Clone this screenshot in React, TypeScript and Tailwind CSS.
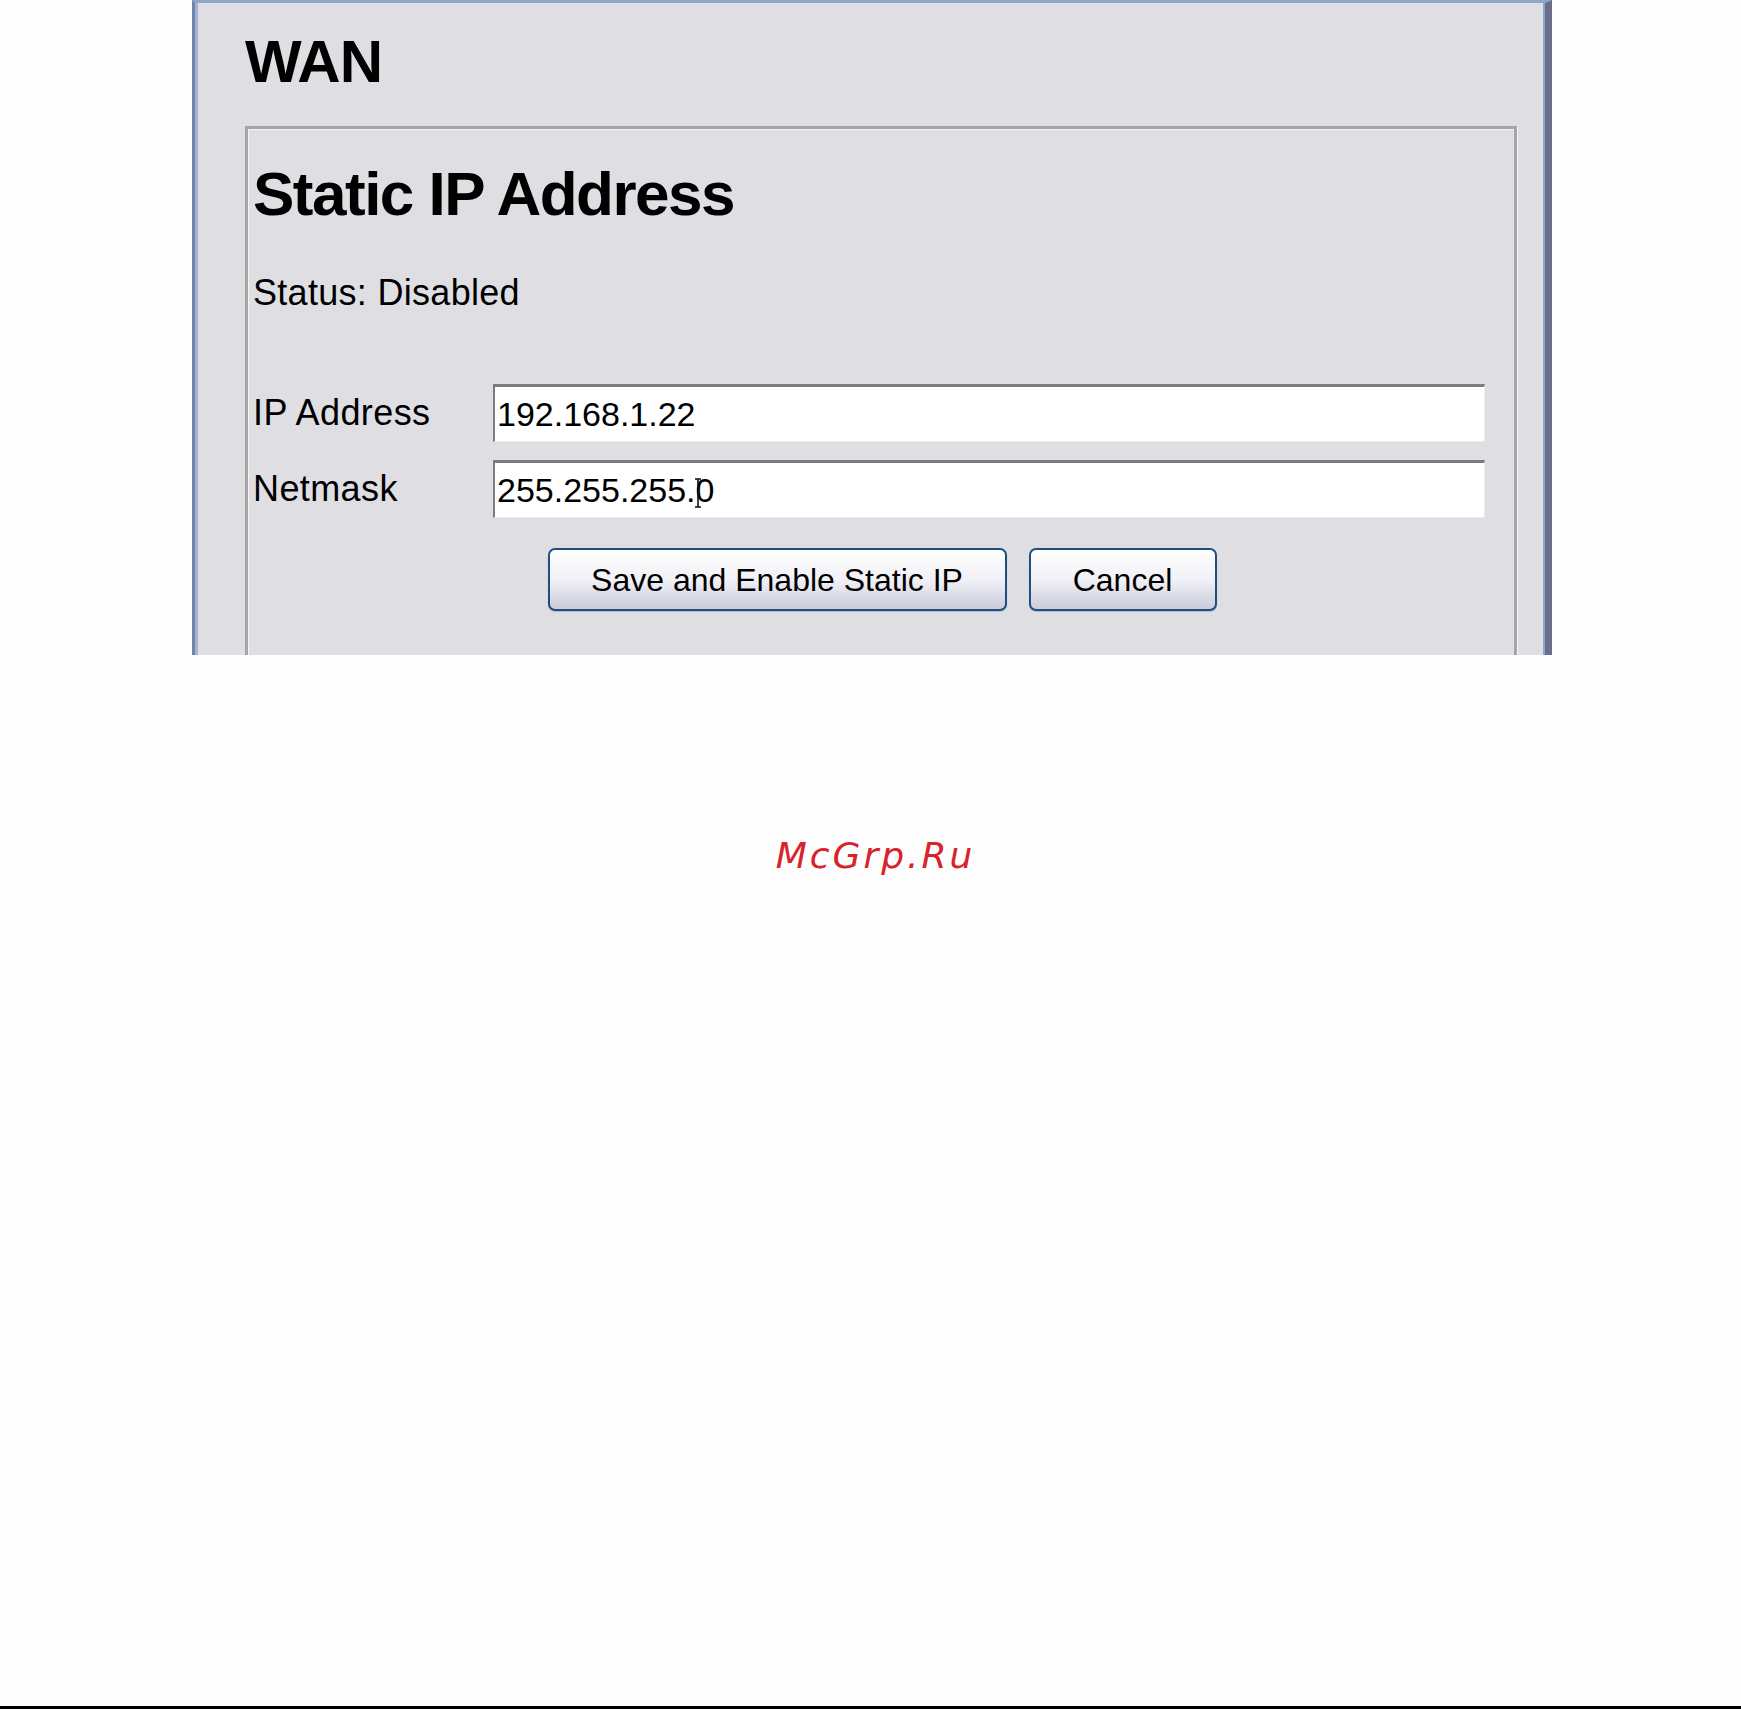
import React from 'react';

const sans = "font-['Liberation_Sans',Arial,sans-serif]";

const Field: React.FC<{ label: string; value: string; caret?: boolean }> = ({ label, value, caret }) => (
  <div className="flex items-center">
    <label className={`w-[240px] shrink-0 text-[36px] leading-none tracking-[0.4px] text-black ${sans}`}>{label}</label>
    <div className="relative w-[992px]">
      <input
        readOnly
        value={value}
        className={`block w-full h-[58px] bg-white border-t-[3px] border-l-[2px] border-r border-b border-t-[#7c7c7c] border-l-[#7c7c7c] border-r-[#ececec] border-b-[#ececec] px-[2px] text-[34px] text-black outline-none ${sans}`}
      />
      {caret && (
        <svg className="absolute left-[200px] top-[18px]" width="10" height="30" viewBox="0 0 10 30">
          <path d="M2 1h3M5 1h3M5 1v28M2 29h3M5 29h3" fill="none" stroke="#111" strokeWidth="1.6" />
        </svg>
      )}
    </div>
  </div>
);

const XpButton: React.FC<{ children: React.ReactNode; width: string }> = ({ children, width }) => (
  <button
    className={`${width} h-[63px] rounded-[7px] border-2 border-[#1e4f82] bg-gradient-to-b from-[#ffffff] via-[#f1f1f6] to-[#cbcbdc] shadow-[0_1px_1px_#b9b9c2] text-[32px] leading-none text-black ${sans}`}
  >
    {children}
  </button>
);

export default function App() {
  return (
    <div className="h-[1709px] w-full bg-[#fdfdfd] flex flex-col">
      {/* window panel */}
      <div className="ml-[192px] w-[1360px] h-[655px] shrink-0 bg-[#dfdfe3] border-t-[3px] border-t-[#8ea7c9] border-l-[3px] border-l-[#7084ac] border-r-[7px] border-r-[#6a6d8b] shadow-[inset_3px_0_0_#a3b4d1,inset_-2px_0_0_#8ea7c9] pl-[50px] pr-[28px] pt-[29px]">
        <h1 className={`text-[60px] font-bold leading-none tracking-[-1px] text-black ${sans}`}>WAN</h1>

        {/* fieldset */}
        <div className="mt-[34px] h-[529px] border-t-[3px] border-l-[3px] border-r-[3px] border-[#a5a5a5] shadow-[inset_1px_1px_0_#f6f6f6,1px_0_0_#f6f6f6] pl-[5px] pt-[34px]">
          <h2 className={`text-[62px] font-bold leading-none tracking-[-1.5px] text-black ${sans}`}>Static IP Address</h2>
          <p className={`mt-[50px] text-[36px] leading-none tracking-[0.3px] text-black ${sans}`}>Status: Disabled</p>

          <div className="mt-[73px] flex flex-col gap-[18px]">
            <Field label="IP Address" value="192.168.1.22" />
            <Field label="Netmask" value="255.255.255.0" caret />
          </div>

          <div className="mt-[30px] flex justify-center gap-[22px] pr-[3px]">
            <XpButton width="w-[459px]">Save and Enable Static IP</XpButton>
            <XpButton width="w-[188px]">Cancel</XpButton>
          </div>
        </div>
      </div>

      {/* watermark */}
      <div className="mt-[183px] flex justify-center pl-[10px]">
        <span className="font-['DejaVu_Sans',sans-serif] italic text-[36px] leading-none tracking-[3px] text-[#d9232b]">McGrp.Ru</span>
      </div>

      <div className="mt-auto h-[3px] w-full bg-black" />
    </div>
  );
}
